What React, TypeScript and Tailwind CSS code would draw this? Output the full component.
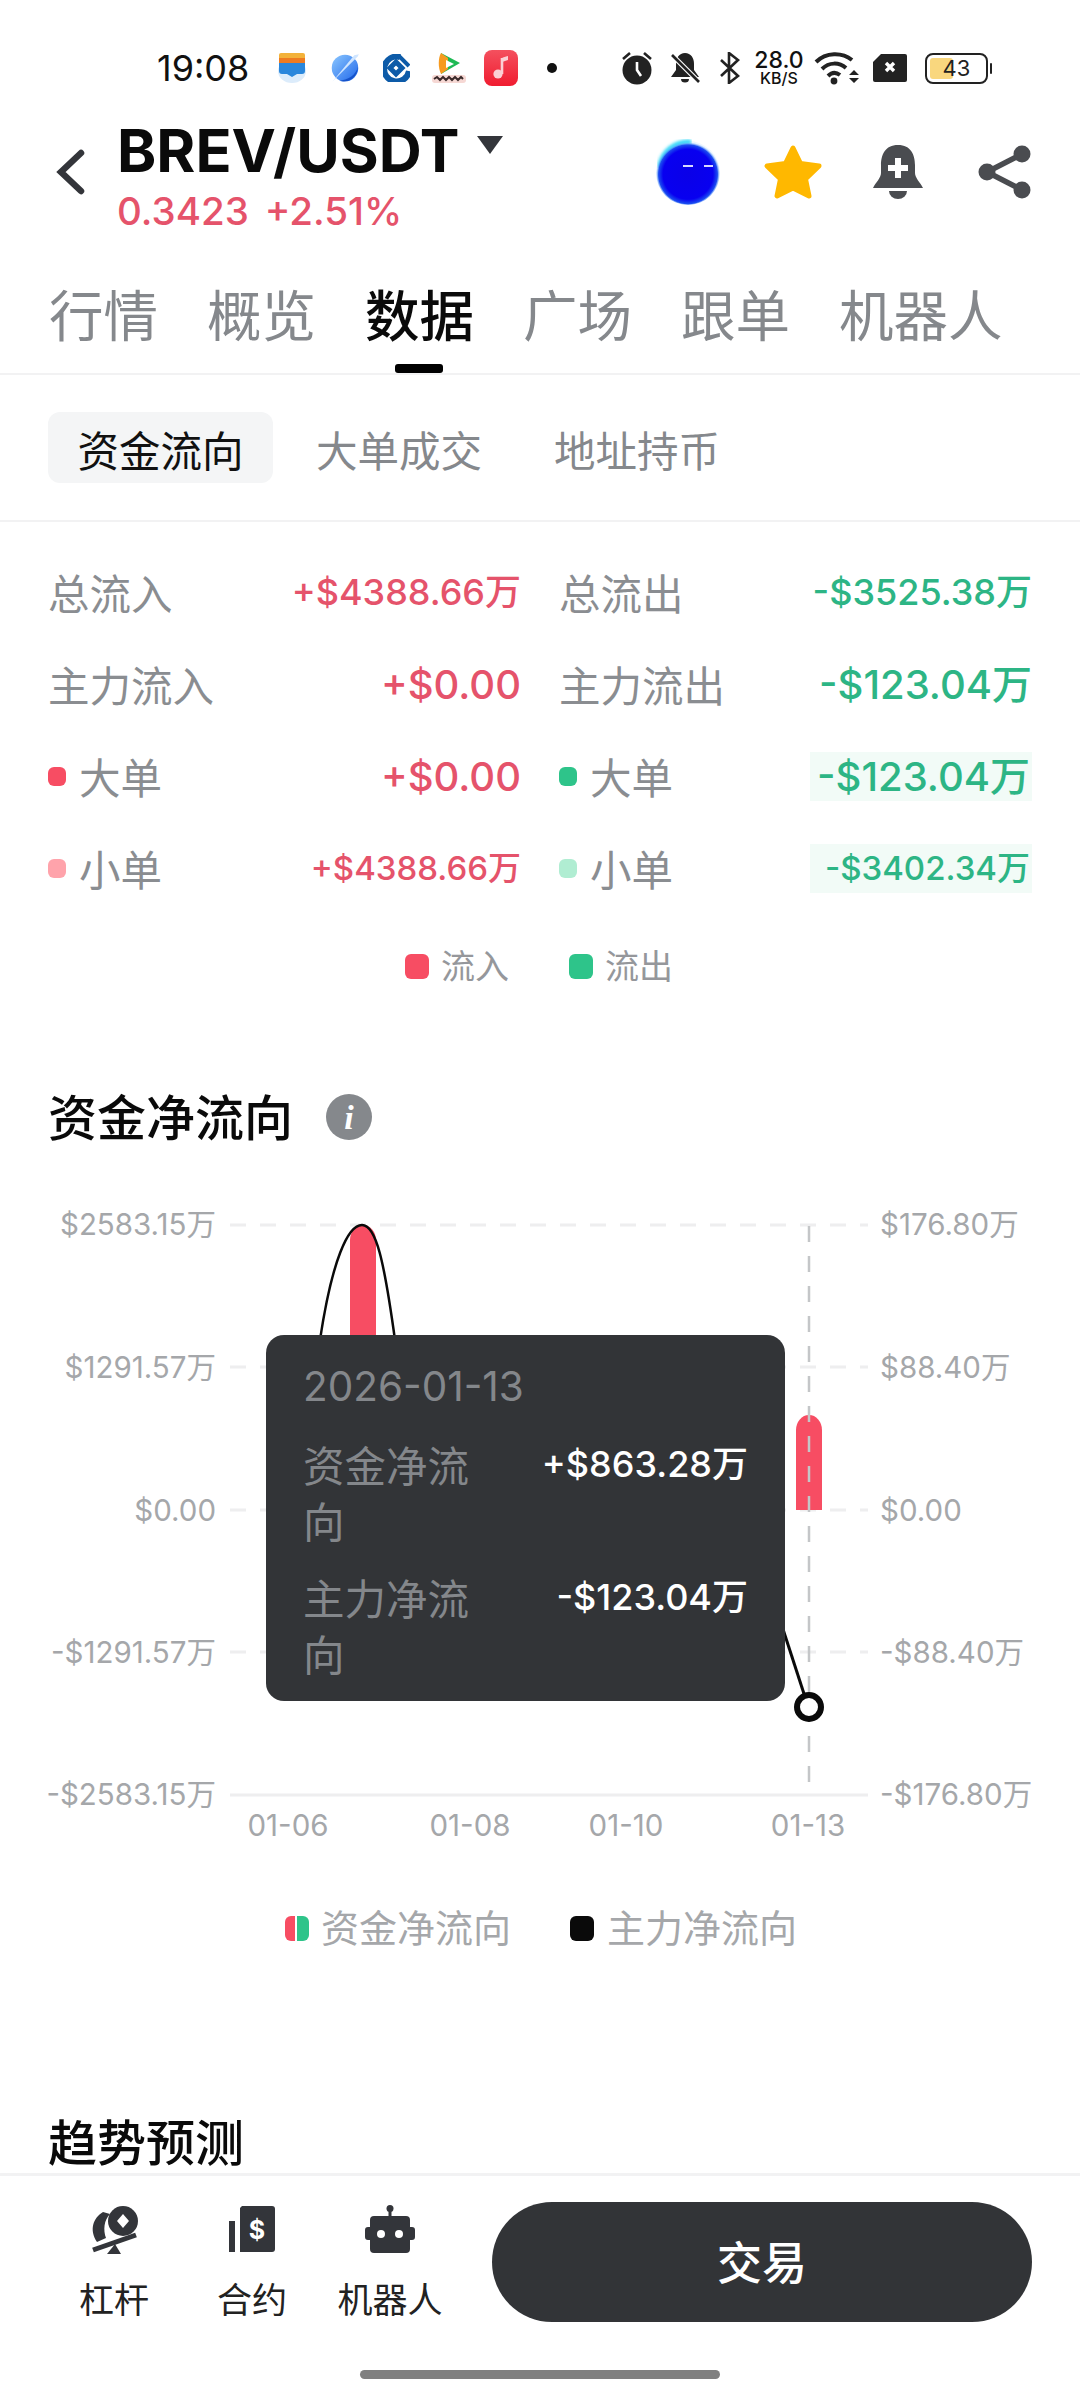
import React from "react";

const Star = () => (
  <svg width="60" height="57" viewBox="0 0 60 57"><polygon points="30,4 37.5,19.5 56,22 42.5,35 46,52 30,44 14,52 17.5,35 4,22 22.5,19.5" fill="#ffb800" stroke="#ffb800" strokeWidth="5" strokeLinejoin="round" /></svg>
);
const BellPlus = () => (
  <svg width="50" height="54" viewBox="0 0 50 54">
    <path d="M25 0C12 0 8 10 8 20V28C8 33 3 37 0 43H50C47 37 42 33 42 28V20C42 10 38 0 25 0Z" fill="#4a4c50" />
    <path d="M22 13h6v7h7v6h-7v7h-6v-7h-7v-6h7z" fill="#fff" />
    <path d="M16 46H34A9 8 0 0 1 16 46Z" fill="#4a4c50" />
  </svg>
);
const Share = () => (
  <svg width="54" height="54" viewBox="0 0 54 54" fill="#4a4c50" stroke="#4a4c50">
    <path d="M44 9L9 27L44 45" fill="none" strokeWidth="5.5" />
    <circle cx="44" cy="9" r="8.5" stroke="none" /><circle cx="9" cy="27" r="8.5" stroke="none" /><circle cx="44" cy="45" r="8.5" stroke="none" />
  </svg>
);
const Blob = () => (
  <svg width="66" height="66" viewBox="0 0 66 66">
    <defs>
      <radialGradient id="bl" cx="50%" cy="52%" r="50%"><stop offset="0%" stopColor="#0a00e8" /><stop offset="78%" stopColor="#0800f0" /><stop offset="92%" stopColor="#1a4cf0" /><stop offset="100%" stopColor="#7fc0ff" stopOpacity="0.15" /></radialGradient>
      <filter id="sf"><feGaussianBlur stdDeviation="1.4" /></filter>
    </defs>
    <path d="M5 26C8 12 20 3 34 3" fill="none" stroke="#2fd8f8" strokeWidth="5" strokeLinecap="round" filter="url(#sf)" />
    <circle cx="33" cy="34" r="32" fill="url(#bl)" />
    <rect x="28" y="26" width="10" height="2" fill="#d8d8ff" /><rect x="49" y="26" width="9" height="2" fill="#d8d8ff" />
  </svg>
);
const StatusLeft = () => (
  <div className="flex items-center">
    <span className="text-[36px] text-[#111] w-[121px] ml-[157px] leading-none">19:08</span>
    <svg width="28" height="32" viewBox="0 0 28 32">
      <ellipse cx="14" cy="19" rx="14" ry="12" fill="#dcecfb" />
      <path d="M1 3a2 2 0 0 1 2-2h22a2 2 0 0 1 2 2v3H1z" fill="#f3b23a" /><rect x="1" y="6" width="26" height="5" fill="#ee7b21" />
      <path d="M1 11h26v8a3 3 0 0 1-3 3h-5l-5 3-5-3H4a3 3 0 0 1-3-3z" fill="#2a87dc" />
    </svg>
    <svg className="ml-[24px]" width="30" height="30" viewBox="0 0 26 26">
      <defs><linearGradient id="pl" x1="0" y1="0" x2="1" y2="1"><stop offset="0%" stopColor="#8cc8ff" /><stop offset="100%" stopColor="#1f66ea" /></linearGradient></defs>
      <circle cx="13" cy="13" r="11.5" fill="url(#pl)" />
      <path d="M2 25L24 3L25 1L21 2Z" fill="#cfe5ff" />
      <path d="M8 24C15 24 23 19 24 12A12 12 0 0 1 8 24Z" fill="#1552c9" />
    </svg>
    <svg className="ml-[23px]" width="27" height="28" viewBox="0 0 27 28">
      <path d="M17 3A12.5 12.5 0 1 0 26 17" fill="none" stroke="#0d5ba8" strokeWidth="6" />
      <path d="M13 8L19 14L13 20L7 14Z" fill="none" stroke="#0d5ba8" strokeWidth="5" />
      <path d="M15 1L26 12" stroke="#0d5ba8" strokeWidth="4" />
    </svg>
    <svg className="ml-[21px]" width="36" height="32" viewBox="0 0 36 32">
      <path d="M10 1L29 11L10 22Z" fill="#1db954" /><path d="M10 1C7 6 7 16 10 22L17 17V6Z" fill="#f79a1f" /><path d="M15 8L23 12L15 16Z" fill="#fff" />
      <rect x="1" y="23" width="34" height="8" rx="3" fill="#f6d8d4" />
      <path d="M3 27l3-2 3 3 3-3 3 3 3-3 3 3 3-3 3 3 3-3 2 2" fill="none" stroke="#3a2a2a" strokeWidth="2" />
    </svg>
    <svg className="ml-[17px]" width="34" height="36" viewBox="0 0 34 36">
      <defs><linearGradient id="mu" x1="0" y1="0" x2="0" y2="1"><stop offset="0%" stopColor="#f4505e" /><stop offset="100%" stopColor="#f01c30" /></linearGradient></defs>
      <rect width="34" height="36" rx="8" fill="url(#mu)" />
      <path d="M18 8V24" stroke="#fbd0d4" strokeWidth="2.6" /><path d="M18 8C20 7 23 6 24 6V10L18 12Z" fill="#fbd0d4" /><circle cx="14" cy="24" r="4.6" fill="#fbd0d4" />
    </svg>
    <span className="ml-[29px] w-[10px] h-[10px] rounded-full bg-[#111]" />
  </div>
);
const StatusRight = () => (
  <div className="flex items-center">
    <svg width="32" height="34" viewBox="0 0 32 34" fill="#222">
      <circle cx="16" cy="19" r="14.5" /><path d="M16 11V19L20 25" fill="none" stroke="#fff" strokeWidth="2.6" />
      <path d="M2 8L9 2M30 8L23 2" stroke="#222" strokeWidth="2.6" />
    </svg>
    <svg className="ml-[17px]" width="30" height="32" viewBox="0 0 30 32" fill="#222">
      <path d="M15 1C9 1 6 6 6 12V18L1 25H29L24 18V12C24 6 21 1 15 1Z" /><path d="M11 27H19A4 3.5 0 0 1 11 27Z" />
      <path d="M1 2L29 30" stroke="#fff" strokeWidth="5" /><path d="M2 3L29 30" stroke="#222" strokeWidth="2.6" />
    </svg>
    <svg className="ml-[19px]" width="22" height="32" viewBox="0 0 22 32" fill="none" stroke="#222" strokeWidth="2.6"><path d="M2 8L19 24L10 31V1L19 8L2 24" /></svg>
    <div className="ml-[13px] w-[50px] flex flex-col items-center text-[#111] leading-none">
      <span className="text-[23px] font-medium h-[19px] leading-[19px]">28.0</span>
      <span className="text-[16px] font-medium h-[16px] leading-[16px]">KB/S</span>
    </div>
    <svg className="ml-[10px]" width="46" height="34" viewBox="0 0 46 34" fill="none" stroke="#222" strokeWidth="4">
      <path d="M2 11C12 1 28 1 38 9" /><path d="M8 18C15 11 25 11 32 17" /><path d="M14 25C18 21 22 21 26 24" />
      <circle cx="20" cy="30" r="3.4" fill="#222" stroke="none" />
      <path d="M35 24L40 19L45 24Z M35 27L45 27L40 32Z" fill="#222" stroke="none" />
    </svg>
    <svg className="ml-[12px]" width="36" height="30" viewBox="0 0 36 30"><path d="M9 1H33a2 2 0 0 1 2 2V27a2 2 0 0 1-2 2H3a2 2 0 0 1-2-2V9Z" fill="#222" /><path d="M14 10L22 18M22 10L14 18" stroke="#fff" strokeWidth="3.4" /></svg>
    <div className="ml-[17px] w-[63px] h-[31px] rounded-[8px] border-[2px] border-[#222] relative overflow-hidden flex items-center justify-center">
      <span className="absolute left-[3px] top-[3px] bottom-[3px] w-[23px] bg-[#f9d77e] rounded-[3px]" />
      <span className="relative text-[22px] leading-none text-[#222]">43</span>
    </div>
    <span className="ml-[2px] w-[2px] h-[11px] bg-[#222] rounded-full" />
  </div>
);

const tabs = ["行情", "概览", "数据", "广场", "跟单", "机器人"];
const rows = [
  ["总流入", "+$4388.66万", "总流出", "-$3525.38万", "", "", 36, 36, false],
  ["主力流入", "+$0.00", "主力流出", "-$123.04万", "", "", 40, 40, false],
  ["大单", "+$0.00", "大单", "-$123.04万", "bg-[#f74d63]", "bg-[#2ec48a]", 40, 40, true],
  ["小单", "+$4388.66万", "小单", "-$3402.34万", "bg-[#ffa3ab]", "bg-[#b0edd2]", 33, 33, true],
] as const;

function Cell({ dot, label, value, color, hl, size }: { dot: string; label: string; value: string; color: string; hl: boolean; size: number }) {
  return (
    <div className="h-[92px] flex items-center justify-between">
      <div className="flex items-center">
        {dot && <span className={`w-[18px] h-[19px] rounded-[6px] mr-[13px] -mt-[6px] ${dot}`} />}
        <span className="text-[41.5px] text-[#8a8d91]">{label}</span>
      </div>
      <span
        className={`${color} ${size === 36 ? "text-[36px]" : size === 33 ? "text-[33px]" : "text-[40px]"} font-[450] leading-[49px] -mt-[6px] ${hl ? "bg-[#f2fbf7] w-[222px] text-right pr-[2px]" : ""}`}
      >
        {value}
      </span>
    </div>
  );
}

const yL = [["$2583.15万", 1224], ["$1291.57万", 1367], ["$0.00", 1510], ["-$1291.57万", 1652], ["-$2583.15万", 1794]] as const;
const yR = [["$176.80万", 1224], ["$88.40万", 1367], ["$0.00", 1510], ["-$88.40万", 1652], ["-$176.80万", 1794]] as const;
const xL = [["01-06", 288], ["01-08", 470], ["01-10", 626], ["01-13", 808]] as const;

function Chart() {
  return (
    <div className="relative h-[700px] mt-[13px]">
      <svg width="1080" height="700" viewBox="0 1160 1080 700" className="block">
        {yL.map(([t, y]) => (
          <text key={t} x="216" y={y + 11} textAnchor="end" fontSize="29.5" fill="#a5a7aa">{t}</text>
        ))}
        {yR.map(([t, y]) => (
          <text key={t} x="880" y={y + 11} fontSize="29.5" fill="#a5a7aa">{t}</text>
        ))}
        {xL.map(([t, x]) => (
          <text key={t} x={x} y="1836" textAnchor="middle" fontSize="29.5" fill="#a5a7aa">{t}</text>
        ))}
        {[1225, 1367, 1510, 1652].map((y) => (
          <path key={y} d={`M230 ${y}H868`} stroke="#eeeeef" strokeWidth="3" strokeDasharray="16 14" />
        ))}
        <path d="M230 1795H868" stroke="#eeeeef" strokeWidth="3" />
        <path d="M350 1400V1240a13 15 0 0 1 26 0V1400Z" fill="#f74d63" />
        <path d="M796 1510V1430a13 15 0 0 1 26 0V1510Z" fill="#f74d63" />
        <path d="M809 1226V1790" stroke="#c4c6c8" strokeWidth="2.5" strokeDasharray="16 14" />
        <path d="M320 1340C332 1260 348 1225 362 1225C376 1225 384 1260 395 1340" fill="none" stroke="#0a0a0a" strokeWidth="2.5" />
        <path d="M780 1620L806 1700" fill="none" stroke="#0a0a0a" strokeWidth="3" />
        <circle cx="809" cy="1707" r="12" fill="#fff" stroke="#0a0a0a" strokeWidth="6" />
      </svg>
      <div className="absolute left-[266px] top-[175px] w-[519px] h-[366px] bg-[#323437] rounded-[18px] px-[37px] pt-[24px]">
        <div className="text-[40.5px] leading-[56px] text-[#84878b]">2026-01-13</div>
        <div className="flex justify-between mt-[24px]">
          <span className="w-[170px] text-[41.5px] leading-[56px] text-[#84878b]">资金净流向</span>
          <span className="text-[36px] leading-[50px] font-[450] text-white">+$863.28万</span>
        </div>
        <div className="flex justify-between mt-[21px]">
          <span className="w-[170px] text-[41.5px] leading-[56px] text-[#84878b]">主力净流向</span>
          <span className="text-[36px] leading-[50px] font-[450] text-white">-$123.04万</span>
        </div>
      </div>
    </div>
  );
}

function FooterItem({ label, icon }: { label: string; icon: React.ReactNode }) {
  return (
    <div className="w-[138px] flex flex-col items-center">
      <div className="h-[54px] flex items-center justify-center">{icon}</div>
      <span className="text-[35px] leading-[44px] mt-[22px] text-[#222]">{label}</span>
    </div>
  );
}

export default function App() {
  return (
    <div className="w-[1080px] h-[2400px] bg-white overflow-hidden flex flex-col font-[Inter,'Noto_Sans_CJK_SC',sans-serif]">
      <div className="h-[100px] shrink-0 flex items-center justify-between pt-[36px] pr-[88px]">
        <StatusLeft />
        <StatusRight />
      </div>
      <div className="h-[150px] shrink-0 flex items-center pl-[55px] pr-[48px]">
        <svg width="30" height="46" viewBox="0 0 30 46" className="mt-[-6px]" fill="none" stroke="#33353a" strokeWidth="6.5" strokeLinecap="round"><path d="M26 4L6 23L26 42" /></svg>
        <div className="ml-[32px] flex flex-col mt-[2px]">
          <div className="flex items-center h-[70px]">
            <span className="text-[59.5px] font-bold text-[#0a0a0a] leading-none">BREV/USDT</span>
            <svg className="ml-[16px] -mt-[12px]" width="28" height="18" viewBox="0 0 28 18"><path d="M1 0H27L14 18Z" fill="#33353a" /></svg>
          </div>
          <div className="flex text-[38.5px] leading-[50px] text-[#e5536b] gap-[16px] font-[450]">
            <span>0.3423</span><span>+2.51%</span>
          </div>
        </div>
        <div className="ml-auto flex items-center -mt-[6px]">
          <Blob />
          <div className="ml-[42px]"><Star /></div>
          <div className="ml-[50px]"><BellPlus /></div>
          <div className="ml-[55px]"><Share /></div>
        </div>
      </div>
      <div className="h-[125px] shrink-0 flex pl-[49px] gap-[49px] border-b-[2px] border-[#f2f2f3]">
        {tabs.map((t) => (
          <div key={t} className="relative pt-[26px]">
            <span className={`text-[54.5px] leading-[80px] ${t === "数据" ? "text-[#0a0a0a] font-medium" : "text-[#85888c]"}`}>{t}</span>
            {t === "数据" && <span className="absolute left-[30px] bottom-0 w-[48px] h-[9px] rounded-[3px] bg-black" />}
          </div>
        ))}
      </div>
      <div className="h-[147px] shrink-0 flex items-start pl-[48px] pt-[37px] border-b-[2px] border-[#f2f2f3]">
        <div className="w-[225px] h-[71px] pt-[10px] rounded-[12px] bg-[#f4f5f6] flex items-center justify-center text-[41.5px] text-[#111]">资金流向</div>
        <div className="ml-[43px] h-[71px] pt-[10px] flex items-center text-[41.5px] text-[#85888c]">大单成交</div>
        <div className="ml-[72px] h-[71px] pt-[10px] flex items-center text-[41.5px] text-[#85888c]">地址持币</div>
      </div>
      <div className="flex-1 overflow-hidden pt-[27px]">
        <div className="grid grid-cols-[473px_473px] gap-x-[38px] pl-[48px]">
          {rows.map((r) => (
            <React.Fragment key={r[0] + r[1]}>
              <Cell dot={r[4]} label={r[0]} value={r[1]} color="text-[#e5536b]" hl={false} size={r[6]} />
              <Cell dot={r[5]} label={r[2]} value={r[3]} color="text-[#2db585]" hl={r[8]} size={r[7]} />
            </React.Fragment>
          ))}
        </div>
        <div className="h-[50px] mt-[24px] flex items-center pl-[405px] text-[34px] text-[#95979b]">
          <span className="w-[24px] h-[25px] rounded-[6px] bg-[#f74d63] mr-[12px]" />流入
          <span className="w-[24px] h-[25px] rounded-[6px] bg-[#2ec48a] ml-[60px] mr-[12px]" />流出
        </div>
        <div className="h-[60px] mt-[96px] flex items-center pl-[48px]">
          <span className="text-[49px] text-[#0a0a0a] font-medium leading-none mt-[2px]">资金净流向</span>
          <span className="ml-[33px] w-[46px] h-[46px] rounded-full bg-[#85888c] flex items-center justify-center text-white text-[34px] font-bold italic font-['Liberation_Serif',serif]">i</span>
        </div>
        <Chart />
        <div className="h-[50px] mt-[43px] flex items-center pl-[285px] text-[38px] text-[#a5a7aa]">
          <span className="w-[24px] h-[25px] rounded-[6px] overflow-hidden flex mr-[12px]"><span className="w-[10px] bg-[#f74d63] mr-[2px]" /><span className="flex-1 bg-[#2ec48a]" /></span>
          资金净流向
          <span className="w-[24px] h-[25px] rounded-[6px] bg-[#0a0a0a] ml-[59px] mr-[13px]" />
          主力净流向
        </div>
        <div className="h-[56px] mt-[163px] pl-[48px] text-[49px] font-medium leading-[56px] text-[#0a0a0a]">趋势预测</div>
      </div>
      <div className="h-[227px] shrink-0 border-t-[3px] border-[#f2f2f3] bg-white relative">
        <div className="flex items-start pl-[45px] pt-[26px]">
          <FooterItem label="杠杆" icon={
            <svg width="50" height="50" viewBox="0 0 50 50">
              <circle cx="34" cy="17" r="15" fill="#33353a" /><path d="M34 10L40 17L34 24L28 17Z" fill="#fff" />
              <path d="M14 8C4 14 0 26 8 38L17 34C14 26 15 16 21 10Z" fill="#33353a" />
              <path d="M4 46L47 31" stroke="#33353a" strokeWidth="5" />
              <path d="M18 50L26 40L32 50Z" fill="#33353a" />
            </svg>
          } />
          <FooterItem label="合约" icon={
            <svg width="46" height="46" viewBox="0 0 46 46">
              <rect x="0" y="15" width="6" height="31" fill="#33353a" />
              <path d="M13 0H43a3 3 0 0 1 3 3V43a3 3 0 0 1-3 3H11V2Z" fill="#33353a" />
              <text x="28" y="33" textAnchor="middle" fontSize="25" fontWeight="700" fill="#fff">$</text>
            </svg>
          } />
          <FooterItem label="机器人" icon={
            <svg width="50" height="48" viewBox="0 0 50 48" fill="#33353a">
              <circle cx="25" cy="3.5" r="3.5" /><rect x="23.5" y="4" width="3" height="9" />
              <rect x="5" y="11" width="40" height="37" rx="4" />
              <path d="M0 25a3 3 0 0 1 3-3h2v13H3a3 3 0 0 1-3-3zM50 25a3 3 0 0 0-3-3h-2v13h2a3 3 0 0 0 3-3z" />
              <circle cx="16" cy="29" r="4" fill="#fff" /><circle cx="34" cy="29" r="4" fill="#fff" />
            </svg>
          } />
          <div className="ml-[33px] w-[540px] h-[120px] pt-[4px] rounded-full bg-[#323437] flex items-center justify-center text-white text-[45px] font-medium">交易</div>
        </div>
        <div className="absolute left-[360px] top-[194px] w-[360px] h-[9px] rounded-full bg-[#808080]" />
      </div>
    </div>
  );
}
